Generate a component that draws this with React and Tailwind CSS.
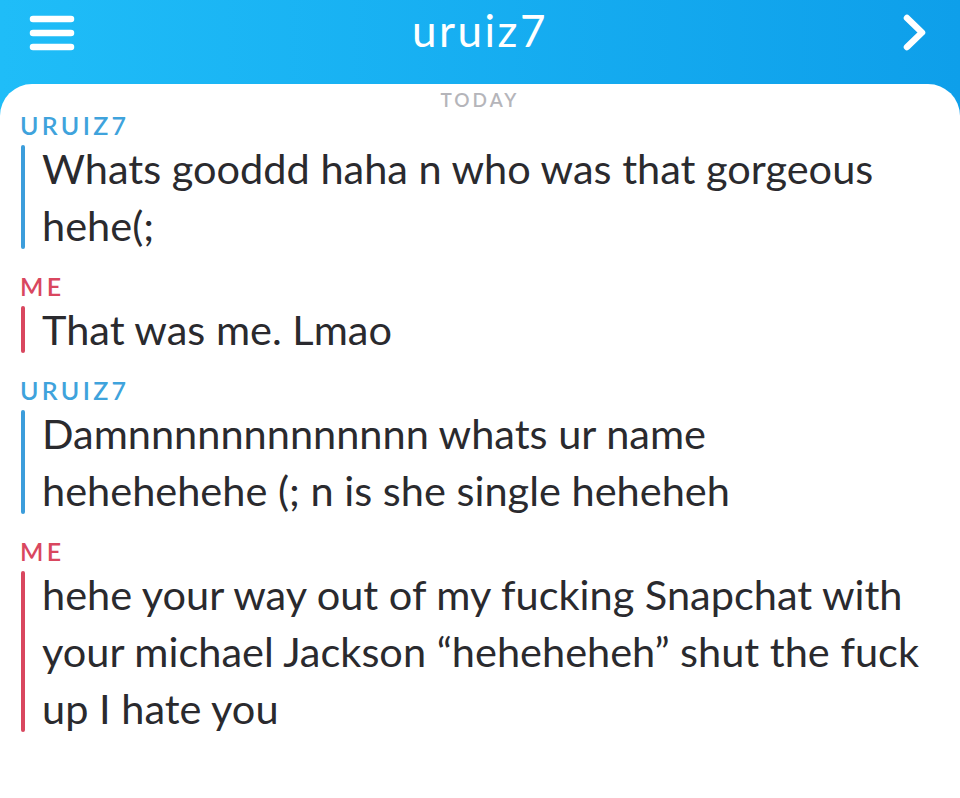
import React from "react";

const messages = [
  { from: "URUIZ7", me: false, lines: ["Whats gooddd haha n who was that gorgeous", "hehe(;"] },
  { from: "ME", me: true, lines: ["That was me. Lmao"] },
  { from: "URUIZ7", me: false, lines: ["Damnnnnnnnnnnnnn whats ur name", "hehehehehe (; n is she single heheheh"] },
  {
    from: "ME",
    me: true,
    lines: [
      "hehe your way out of my fucking Snapchat with",
      "your michael Jackson \u201cheheheheh\u201d shut the fuck",
      "up I hate you",
    ],
  },
];

const Message = ({ msg }) => (
  <div className="mb-[17px]">
    <div
      className={`text-[25px] leading-[30px] font-semibold tracking-[3.3px] pl-[20px] ${
        msg.me ? "text-[#d9475f]" : "text-[#3fa3dc]"
      }`}
    >
      {msg.from}
    </div>
    <div className="flex pl-[21px]">
      <div className={`w-[4px] rounded-full my-[5px] ${msg.me ? "bg-[#d9475f]" : "bg-[#3c9ddb]"}`} />
      <div className="pl-[17px] text-[41.5px] leading-[57px] text-[#2a2a2e] whitespace-nowrap">
        {msg.lines.map((l, i) => (
          <div key={i}>{l}</div>
        ))}
      </div>
    </div>
  </div>
);

export default function App() {
  return (
    <div
      className="w-[960px] h-[798px] overflow-hidden bg-gradient-to-r from-[#1fbdf8] to-[#0e9fea]"
      style={{ fontFamily: "Lato, 'Open Sans', sans-serif" }}
    >
      <div className="h-[84px] grid grid-cols-[1fr_auto_1fr] items-start px-[29px] pt-[14px]">
        <svg width="46" height="38" viewBox="0 0 46 38">
          <g stroke="white" strokeWidth="6.5" strokeLinecap="round">
            <line x1="4" y1="5" x2="42" y2="5" />
            <line x1="4" y1="19" x2="42" y2="19" />
            <line x1="4" y1="33" x2="42" y2="33" />
          </g>
        </svg>
        <div className="text-white text-[44px] leading-[40px] font-normal tracking-[2.5px] -mt-[4px]">uruiz7</div>
        <div className="flex justify-end">
          <svg width="30" height="40" viewBox="0 0 30 40" className="mr-[2px]">
            <polyline
              points="8,4 23,18.5 8,33"
              fill="none"
              stroke="white"
              strokeWidth="6.5"
              strokeLinecap="round"
              strokeLinejoin="round"
            />
          </svg>
        </div>
      </div>
      <div className="bg-white rounded-t-[32px] h-[714px] pt-[5px]">
        <div className="text-center text-[19px] leading-[22px] tracking-[3px] text-[#b5b5ba] font-semibold">
          TODAY
        </div>
        <div className="-mt-[1px]">
          {messages.map((m, i) => (
            <Message key={i} msg={m} />
          ))}
        </div>
      </div>
    </div>
  );
}
